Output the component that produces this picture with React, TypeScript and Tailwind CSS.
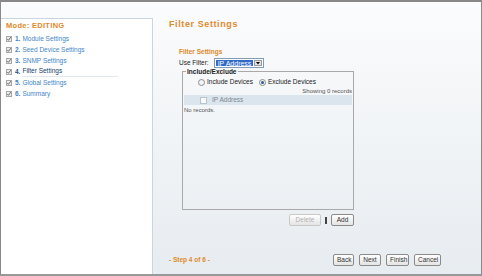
import React from 'react';

const steps = [
  { n: '1.', label: 'Module Settings' },
  { n: '2.', label: 'Seed Device Settings' },
  { n: '3.', label: 'SNMP Settings' },
  { n: '4.', label: 'Filter Settings', current: true },
  { n: '5.', label: 'Global Settings' },
  { n: '6.', label: 'Summary' },
];

function CheckIcon() {
  return (
    <svg width="6" height="6" viewBox="0 0 6 6" className="shrink-0">
      <rect x="0.5" y="0.5" width="5" height="5" fill="#ececec" stroke="#a8a8a8" />
      <path d="M1.3 3 L2.5 4.3 L4.8 1.2" stroke="#6a6a6a" strokeWidth="1" fill="none" />
    </svg>
  );
}

function Radio({ checked }: { checked?: boolean }) {
  return (
    <span className="w-[7px] h-[7px] rounded-full border border-[#8c8c8c] bg-[#f4f4f4] flex items-center justify-center shrink-0">
      {checked && <span className="w-[3px] h-[3px] rounded-full bg-[#2a5a9a]" />}
    </span>
  );
}

function Btn({ children, disabled, className = '' }: { children: React.ReactNode; disabled?: boolean; className?: string }) {
  return (
    <button
      className={
        'h-[12px] px-[3px] rounded-[2px] border text-[6.5px] leading-none bg-gradient-to-b from-white to-[#e4e4e4] ' +
        (disabled ? 'border-[#c8c8c8] text-[#b0b0b0] ' : 'border-[#8a8a8a] text-[#333] ') +
        className
      }
    >
      {children}
    </button>
  );
}

export default function App() {
  return (
    <div
      className="w-[482px] h-[276px] flex border-x border-b-2 border-t-2 border-x-[#8a8a8a] border-t-[#888] border-b-[#999] bg-gradient-to-b from-[#fbfcfd] to-[#e7ecf0] overflow-hidden"
      style={{ fontFamily: '"Liberation Sans", Arial, sans-serif' }}
    >
      {/* sidebar */}
      <div className="w-[152px] pt-[16px] flex flex-col shrink-0">
        <div className="flex-1 bg-white border-t border-r border-[#c9d6e1] pl-[5px] pt-[1px]">
          <div className="text-[7.5px] font-bold text-[#e0892a] tracking-[0.3px] mb-[2px]">Mode: EDITING</div>
          <div className="flex flex-col">
            {steps.map((s) => (
              <div key={s.n} className="h-[11px] flex items-center gap-[2px] text-[6.5px]">
                <CheckIcon />
                <span className={'font-bold ml-[1px] ' + (s.current ? 'text-[#1d4f80]' : 'text-[#3f7fbf]')}>{s.n}</span>
                <span
                  className={
                    s.current
                      ? 'text-[#123e6c] border-b border-[#e3e8ee] w-[96px] leading-[10px]'
                      : 'text-[#3f86c8]'
                  }
                >
                  {s.label}
                </span>
              </div>
            ))}
          </div>
        </div>
      </div>

      {/* main */}
      <div className="flex-1 flex flex-col pl-[16px] pr-[40px]">
        <div className="pt-[16px] text-[9px] font-bold text-[#e0892a] tracking-[0.6px]">Filter Settings</div>

        <div className="pl-[10px] mt-[15px]">
          <div className="text-[6.5px] font-bold text-[#e0892a]">Filter Settings</div>
          <div className="flex items-center gap-[5px] mt-[2px] text-[6.5px] text-[#222]">
            <span>Use Filter:</span>
            <div className="flex h-[10px] w-[50px] border border-[#7f9db9] bg-white p-[1px]">
              <div className="flex-1 bg-[#3169c6] text-white text-[7px] leading-[8px] pl-[2px]">IP Address</div>
              <div className="w-[8px] ml-[1px] bg-[#e6e6e6] border border-[#9a9a9a] flex items-center justify-center">
                <svg width="4" height="3" viewBox="0 0 4 3">
                  <path d="M0 0 H4 L2 2.5 Z" fill="#000" />
                </svg>
              </div>
            </div>
          </div>

          <div className="ml-[3px] w-[172px]">
            <fieldset className="border border-[#a9a9a9] h-[142px] flex flex-col">
              <legend className="ml-[3px] px-[1px] text-[6.5px] leading-[7px] font-bold text-[#222]">Include/Exclude</legend>
              <div className="flex items-center pl-[15px] gap-[2px] text-[6.5px] leading-[8px] text-[#222] mt-[3px]">
                <Radio />
                <span className="mr-[4px]">Include Devices</span>
                <Radio checked />
                <span>Exclude Devices</span>
              </div>
              <div className="text-right text-[6px] leading-[8px] text-[#555] pr-[1px] mt-[1px]">Showing 0 records</div>
              <div className="mx-[1px] h-[10px] bg-[#dbe5ee] flex items-center pl-[16px] gap-[5px]">
                <span className="w-[7px] h-[7px] border border-[#b9c3cc] bg-[#f7f9fb]" />
                <span className="text-[6.5px] text-[#7f8891]">IP Address</span>
              </div>
              <div className="text-[6px] leading-[8px] text-[#555] mt-[1px] pl-[1px]">No records.</div>
            </fieldset>
            <div className="flex justify-end items-center gap-[4px] mt-[4px]">
              <Btn disabled className="w-[32px]">Delete</Btn>
              <span className="w-[2px] h-[7px] bg-[#444]" />
              <Btn className="w-[23px]">Add</Btn>
            </div>
          </div>
        </div>

        <div className="mt-auto mb-[8px] flex items-center">
          <span className="text-[6.5px] font-bold text-[#e0892a]">- Step 4 of 6 -</span>
          <div className="ml-auto flex gap-[5px]">
            <Btn className="w-[21px]">Back</Btn>
            <Btn className="w-[22px]">Next</Btn>
            <Btn className="w-[23px]">Finish</Btn>
            <Btn className="w-[27px]">Cancel</Btn>
          </div>
        </div>
      </div>
    </div>
  );
}
